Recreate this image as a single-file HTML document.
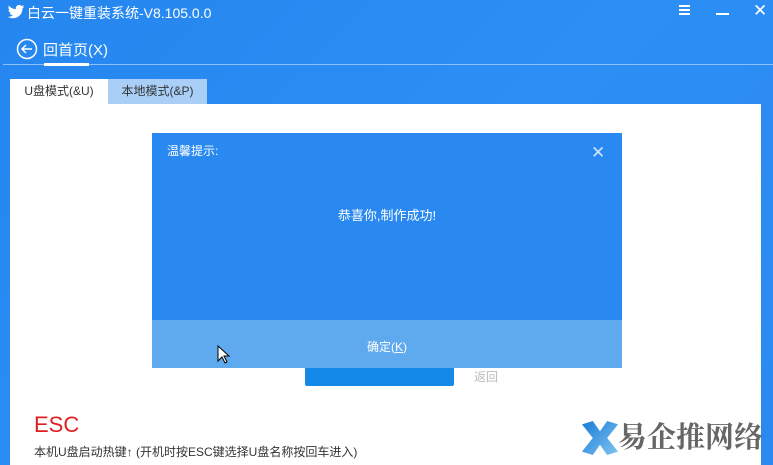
<!DOCTYPE html>
<html><head><meta charset="utf-8"><style>
html,body{margin:0;width:773px;height:465px;overflow:hidden}
body{background:#2a8af0;font-family:"Liberation Sans","Noto Sans CJK SC",sans-serif;position:relative}
.a{position:absolute;white-space:nowrap}
</style></head><body>
<div class="a" style="left:0;top:0;width:773px;height:465px;background:linear-gradient(135deg,#2486ee,#2d8ef5 50%,#2a8af0)"></div>
<svg class="a" style="left:7px;top:5px" width="18" height="15" viewBox="0 0 24 20"><path d="M23 2c-.8.4-1.7.6-2.6.7.9-.6 1.6-1.4 2-2.5-.9.5-1.9.9-2.9 1.100C18.6.4 17.4 0 16.200 0c-2.500 0-4.500 2-4.500 4.500 0 .4 0 .7.1 1C8 5.300 4.700 3.500 2.500.8c-.4.700-.6 1.500-.6 2.300 0 1.600.8 2.900 2 3.700-.7 0-1.400-.2-2-.6 0 2.200 1.600 4 3.600 4.400-.7.2-1.400.2-2 .1.6 1.800 2.200 3.100 4.200 3.100-1.500 1.200-3.500 1.900-5.600 1.900H1c2 1.300 4.400 2 6.900 2 8.300 0 12.800-6.900 12.800-12.800v-.6C21.600 3.700 22.400 2.900 23 2z" fill="#fff"/></svg>
<div class="a" style="left:27px;top:3px;color:#fff;font-size:14px">白云一键重装系统-V8.105.0.0</div>
<div class="a" style="left:679px;top:5px;width:11px;height:2px;background:#fff;box-shadow:0 4px #fff,0 8px #fff"></div>
<div class="a" style="left:716px;top:13px;width:13px;height:2px;background:#fff"></div>
<div class="a" style="left:753px;top:1px;color:#fff;font-size:17px">✕</div>
<svg class="a" style="left:16px;top:38px" width="22" height="22" viewBox="0 0 22 22"><circle cx="11" cy="11" r="9.5" fill="none" stroke="#fff" stroke-width="1.5"/><path d="M16 11H6M10 7l-4 4 4 4" fill="none" stroke="#fff" stroke-width="1.5"/></svg>
<div class="a" style="left:43px;top:39px;color:#fff;font-size:15px">回首页(X)</div>
<div class="a" style="left:3px;top:64px;width:770px;height:1px;background:#8cc2f7"></div>
<div class="a" style="left:44px;top:63px;width:45px;height:3px;background:#fff"></div>
<div class="a" style="left:10px;top:79px;width:98px;height:26px;background:#fff;color:#333;font-size:12px;line-height:24px;text-align:center">U盘模式(&amp;U)</div>
<div class="a" style="left:108px;top:79px;width:99px;height:25px;background:#a9cff7;color:#333;font-size:12px;line-height:24px;text-align:center">本地模式(&amp;P)</div>
<div class="a" style="left:10px;top:104px;width:751px;height:361px;background:#fff"></div>
<div class="a" style="left:305px;top:362px;width:149px;height:24px;background:#1589e8;border-radius:2px"></div>
<div class="a" style="left:474px;top:368px;color:#bbb;font-size:12px">返回</div>
<div class="a" style="left:34px;top:412px;color:#e02020;font-size:22px">ESC</div>
<div class="a" style="left:34px;top:443px;color:#333;font-size:12px">本机U盘启动热键↑ (开机时按ESC键选择U盘名称按回车进入)</div>
<div class="a" style="left:582px;top:421px;width:36px;height:34px;background:linear-gradient(135deg,#1a7cd8,#7fc3f0);clip-path:polygon(0 10%,30% 0,50% 30%,70% 0,100% 10%,70% 50%,100% 90%,70% 100%,50% 70%,30% 100%,0 90%,30% 50%)"></div>
<div class="a" style="left:618px;top:418px;color:#666;font-size:29px;line-height:36px;font-weight:bold;font-family:'Noto Serif CJK SC',serif">易企推网络</div>
<div class="a" style="left:152px;top:133px;width:470px;height:187px;background:#2a89f0"></div>
<div class="a" style="left:152px;top:320px;width:470px;height:48px;background:#5fa9ef"></div>
<div class="a" style="left:167px;top:142px;color:#fff;font-size:12px">温馨提示:</div>
<div class="a" style="left:591px;top:143px;color:#cfe4fb;font-size:17px">✕</div>
<div class="a" style="left:152px;top:205px;width:470px;text-align:center;color:#fff;font-size:13px">恭喜你,制作成功!</div>
<div class="a" style="left:152px;top:338px;width:470px;text-align:center;color:#fff;font-size:12px">确定(<u>K</u>)</div>
<svg class="a" style="left:217px;top:345px" width="14" height="20" viewBox="0 0 14 20"><path d="M1 1v15l4-4 3 6 2-1-3-6h5z" fill="#fff" stroke="#000" stroke-width="1"/></svg>
</body></html>
